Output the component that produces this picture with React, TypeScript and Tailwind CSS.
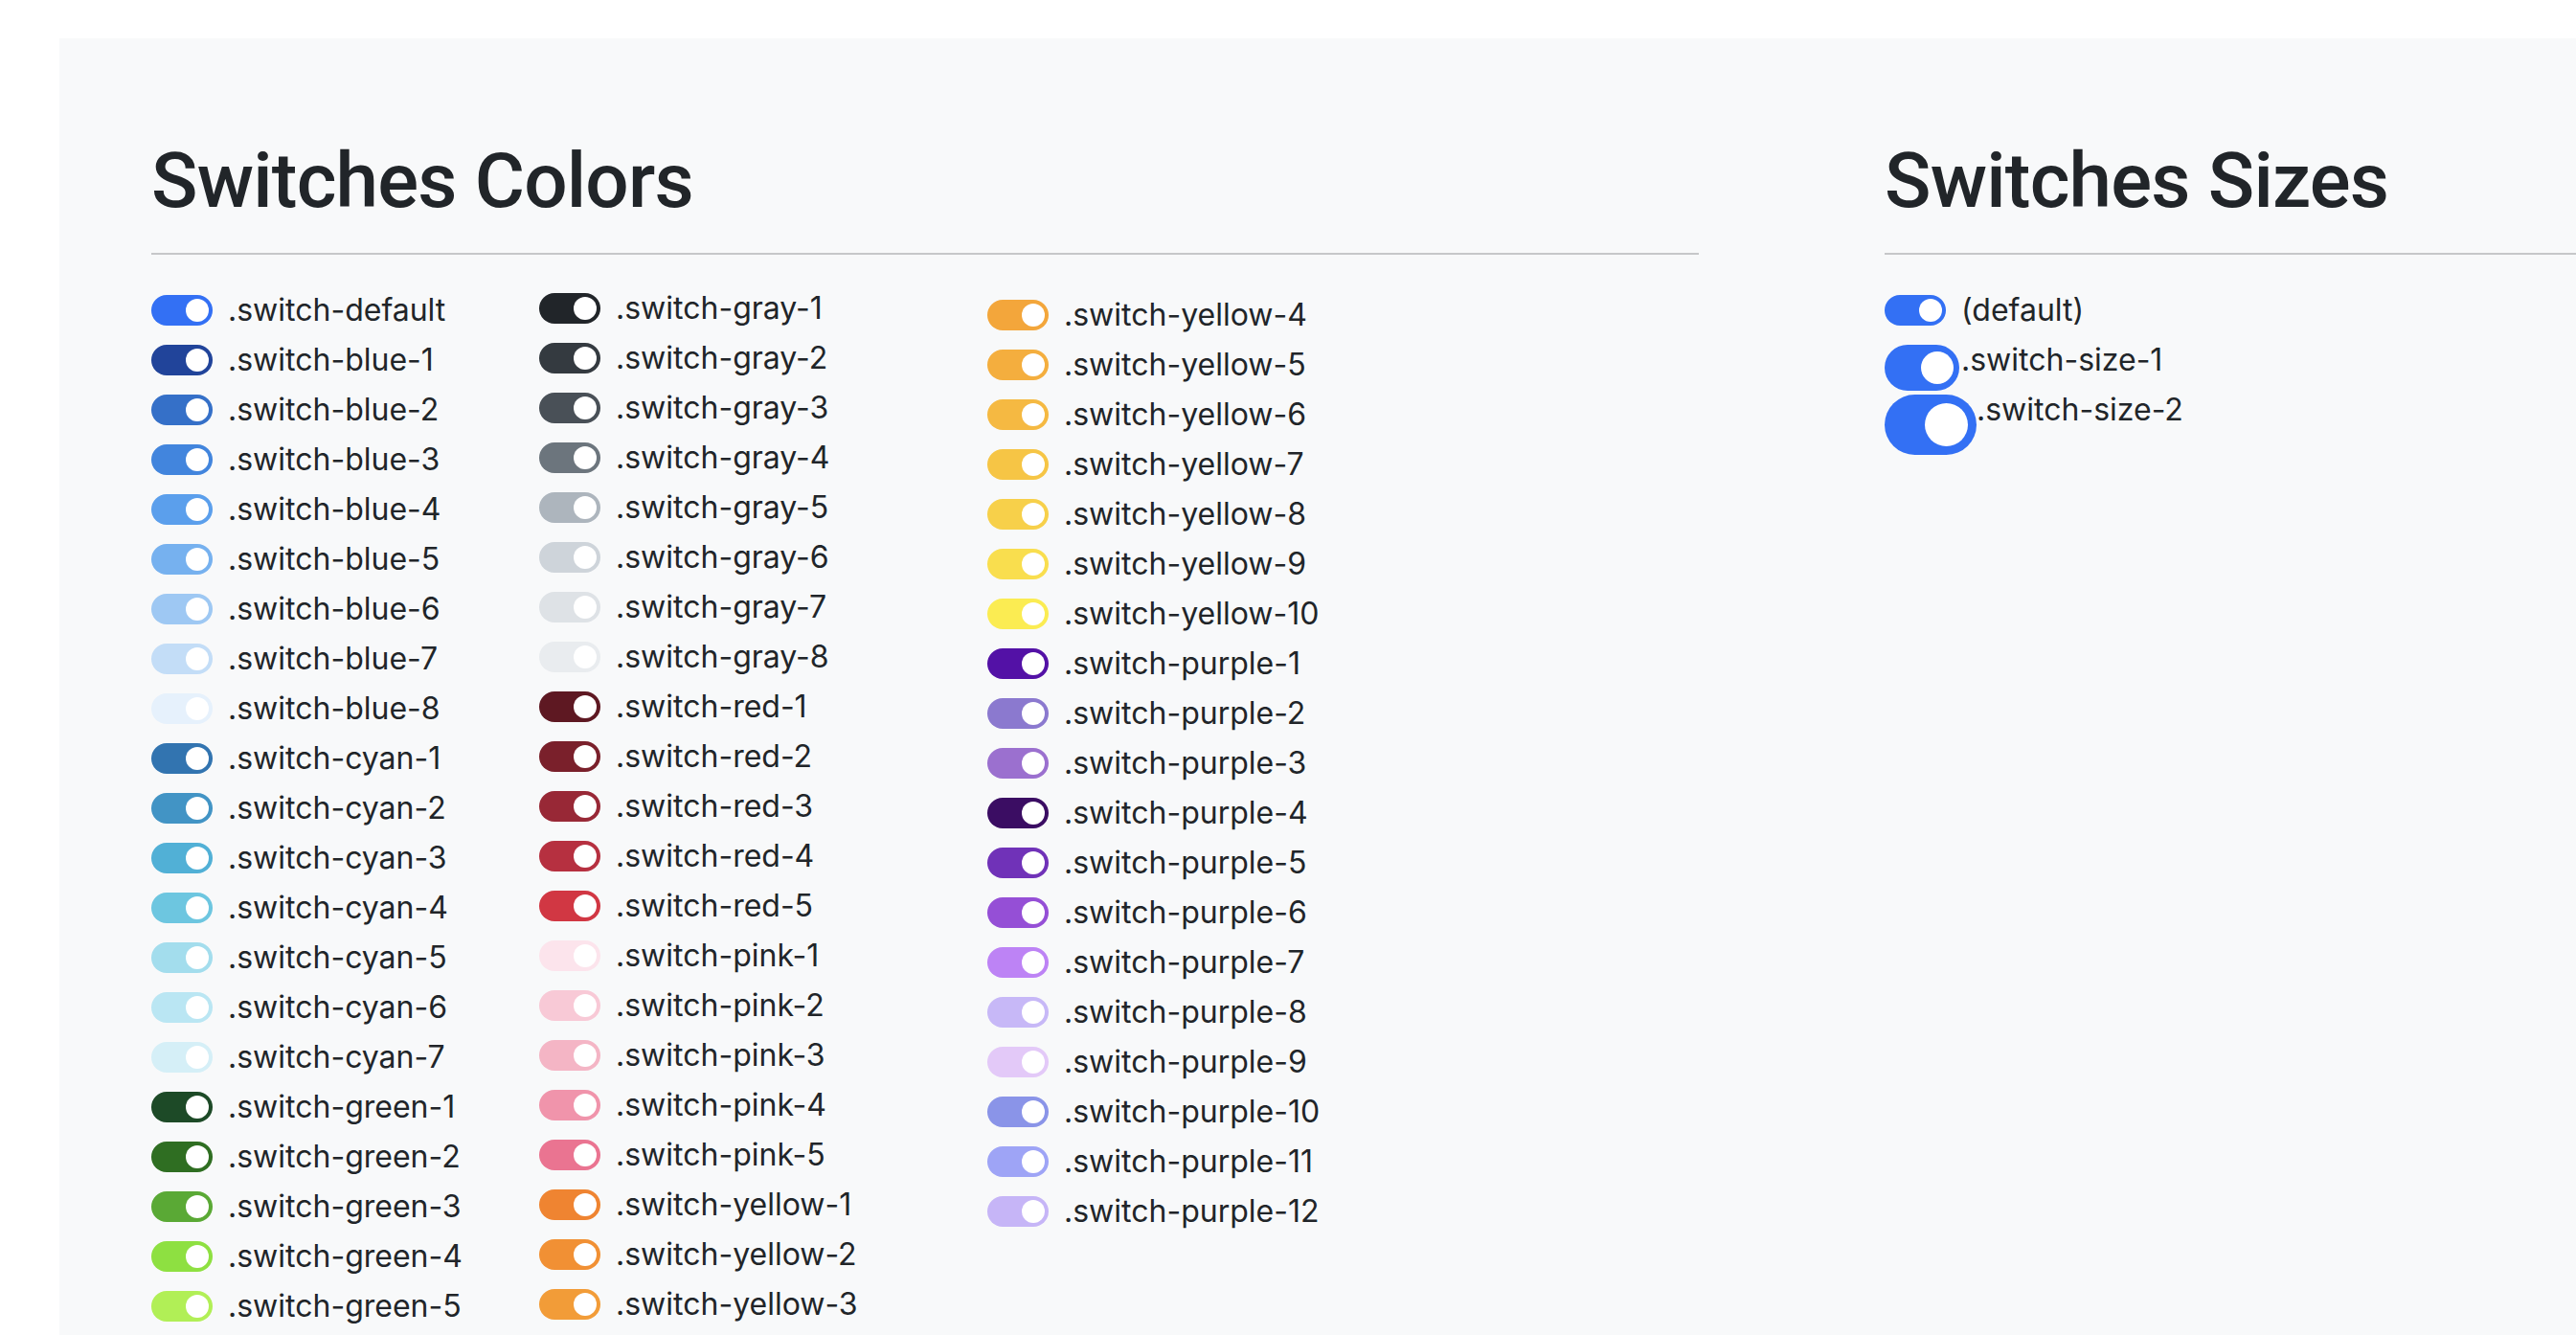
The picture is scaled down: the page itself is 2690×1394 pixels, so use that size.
import React from 'react';

type Swatch = { name: string; bg: string };

// three columns of colour switches, as in the reference
const columnOne: Swatch[] = [
    { name: '.switch-default', bg: 'bg-[#3370f4]' },
    { name: '.switch-blue-1', bg: 'bg-[#21449a]' },
    { name: '.switch-blue-2', bg: 'bg-[#3570c8]' },
    { name: '.switch-blue-3', bg: 'bg-[#4285dd]' },
    { name: '.switch-blue-4', bg: 'bg-[#5b9fec]' },
    { name: '.switch-blue-5', bg: 'bg-[#76b1ef]' },
    { name: '.switch-blue-6', bg: 'bg-[#9ec8f3]' },
    { name: '.switch-blue-7', bg: 'bg-[#c3ddf7]' },
    { name: '.switch-blue-8', bg: 'bg-[#e6f1fc]' },
    { name: '.switch-cyan-1', bg: 'bg-[#3274b0]' },
    { name: '.switch-cyan-2', bg: 'bg-[#4294c5]' },
    { name: '.switch-cyan-3', bg: 'bg-[#51b0d6]' },
    { name: '.switch-cyan-4', bg: 'bg-[#6dc6e0]' },
    { name: '.switch-cyan-5', bg: 'bg-[#a3dded]' },
    { name: '.switch-cyan-6', bg: 'bg-[#bae6f3]' },
    { name: '.switch-cyan-7', bg: 'bg-[#d5eff7]' },
    { name: '.switch-green-1', bg: 'bg-[#1d4a27]' },
    { name: '.switch-green-2', bg: 'bg-[#2f6e22]' },
    { name: '.switch-green-3', bg: 'bg-[#5aa935]' },
    { name: '.switch-green-4', bg: 'bg-[#8ee041]' },
    { name: '.switch-green-5', bg: 'bg-[#b1ef56]' },
];

const columnTwo: Swatch[] = [
    { name: '.switch-gray-1', bg: 'bg-[#212529]' },
    { name: '.switch-gray-2', bg: 'bg-[#343a40]' },
    { name: '.switch-gray-3', bg: 'bg-[#495057]' },
    { name: '.switch-gray-4', bg: 'bg-[#6c757d]' },
    { name: '.switch-gray-5', bg: 'bg-[#adb5bd]' },
    { name: '.switch-gray-6', bg: 'bg-[#ced4da]' },
    { name: '.switch-gray-7', bg: 'bg-[#dee2e6]' },
    { name: '.switch-gray-8', bg: 'bg-[#e9ecef]' },
    { name: '.switch-red-1', bg: 'bg-[#5e1822]' },
    { name: '.switch-red-2', bg: 'bg-[#7a202b]' },
    { name: '.switch-red-3', bg: 'bg-[#982836]' },
    { name: '.switch-red-4', bg: 'bg-[#b63040]' },
    { name: '.switch-red-5', bg: 'bg-[#d13743]' },
    { name: '.switch-pink-1', bg: 'bg-[#fce4ec]' },
    { name: '.switch-pink-2', bg: 'bg-[#f8c9d6]' },
    { name: '.switch-pink-3', bg: 'bg-[#f4b5c5]' },
    { name: '.switch-pink-4', bg: 'bg-[#f094ab]' },
    { name: '.switch-pink-5', bg: 'bg-[#ea7491]' },
    { name: '.switch-yellow-1', bg: 'bg-[#ef8431]' },
    { name: '.switch-yellow-2', bg: 'bg-[#f19034]' },
    { name: '.switch-yellow-3', bg: 'bg-[#f29c38]' },
];

const columnThree: Swatch[] = [
    { name: '.switch-yellow-4', bg: 'bg-[#f3a63b]' },
    { name: '.switch-yellow-5', bg: 'bg-[#f4ae3e]' },
    { name: '.switch-yellow-6', bg: 'bg-[#f5b942]' },
    { name: '.switch-yellow-7', bg: 'bg-[#f6c545]' },
    { name: '.switch-yellow-8', bg: 'bg-[#f7d04a]' },
    { name: '.switch-yellow-9', bg: 'bg-[#f9de4e]' },
    { name: '.switch-yellow-10', bg: 'bg-[#fbec52]' },
    { name: '.switch-purple-1', bg: 'bg-[#5311a6]' },
    { name: '.switch-purple-2', bg: 'bg-[#8b79cf]' },
    { name: '.switch-purple-3', bg: 'bg-[#9b70cf]' },
    { name: '.switch-purple-4', bg: 'bg-[#3b0d63]' },
    { name: '.switch-purple-5', bg: 'bg-[#7032b8]' },
    { name: '.switch-purple-6', bg: 'bg-[#954fd6]' },
    { name: '.switch-purple-7', bg: 'bg-[#bd83f5]' },
    { name: '.switch-purple-8', bg: 'bg-[#c7b8f7]' },
    { name: '.switch-purple-9', bg: 'bg-[#e3c9f8]' },
    { name: '.switch-purple-10', bg: 'bg-[#8a94e8]' },
    { name: '.switch-purple-11', bg: 'bg-[#9ea4f6]' },
    { name: '.switch-purple-12', bg: 'bg-[#c6b5f7]' },
];

function Toggle({ bg, size = 'md' }: { bg: string; size?: 'md' | 'lg' | 'xl' }) {
    if (size === 'lg') {
        return (
            <span className={`flex h-12 w-[78px] items-center justify-end rounded-full pr-[6px] ${bg}`}>
                <span className="size-[34px] rounded-full bg-white" />
            </span>
        );
    }
    if (size === 'xl') {
        return (
            <span className={`flex h-[63px] w-24 items-center justify-end rounded-full pr-[9px] ${bg}`}>
                <span className="size-[45px] rounded-full bg-white" />
            </span>
        );
    }
    return (
        <span className={`flex h-8 w-16 items-center justify-end rounded-full pr-1 ${bg}`}>
            <span className="size-6 rounded-full bg-white" />
        </span>
    );
}

function SwitchRow({ label, bg, size }: { label: string; bg: string; size?: 'md' | 'lg' | 'xl' }) {
    return (
        <div className="mb-1 flex h-12">
            <div className="min-w-20 shrink-0 pt-2">
                <Toggle bg={bg} size={size} />
            </div>
            <span className="whitespace-nowrap text-[32px] leading-[48px]">{label}</span>
        </div>
    );
}

function SectionTitle({ children }: { children: React.ReactNode }) {
    return (
        <>
            <h1 className="whitespace-nowrap font-['Roboto','Liberation_Sans',sans-serif] text-[80px] font-medium leading-[96px] tracking-[-0.01em] text-[#212529]">
                {children}
            </h1>
            <hr className="mt-[27px] border-t-2 border-[#c6c7c9]" />
        </>
    );
}

export default function App() {
    return (
        <div className="min-h-screen overflow-hidden bg-white font-['Inter','Noto_Sans',sans-serif] text-[#212529]">
            <div className="ml-[62px] mt-10 flex min-h-[1354px] bg-[#f8f9fa] pl-24 pt-[101px]">
                {/* Colors */}
                <div className="w-[1616px] shrink-0">
                    <SectionTitle>Switches Colors</SectionTitle>
                    <div className="mt-[32px] flex items-start">
                        <div className="mt-[2px] w-[405px] shrink-0">
                            {columnOne.map(s => (
                                <SwitchRow key={s.name} label={s.name} bg={s.bg} />
                            ))}
                        </div>
                        <div className="w-[468px] shrink-0">
                            {columnTwo.map(s => (
                                <SwitchRow key={s.name} label={s.name} bg={s.bg} />
                            ))}
                        </div>
                        <div className="mt-[7px] shrink-0">
                            {columnThree.map(s => (
                                <SwitchRow key={s.name} label={s.name} bg={s.bg} />
                            ))}
                        </div>
                    </div>
                </div>

                {/* Sizes */}
                <div className="ml-[194px] flex-1">
                    <SectionTitle>Switches Sizes</SectionTitle>
                    <div className="mt-[34px]">
                        <SwitchRow label="(default)" bg="bg-[#3370f4]" />
                        <SwitchRow label=".switch-size-1" bg="bg-[#3370f4]" size="lg" />
                        <SwitchRow label=".switch-size-2" bg="bg-[#3370f4]" size="xl" />
                    </div>
                </div>
            </div>
        </div>
    );
}
